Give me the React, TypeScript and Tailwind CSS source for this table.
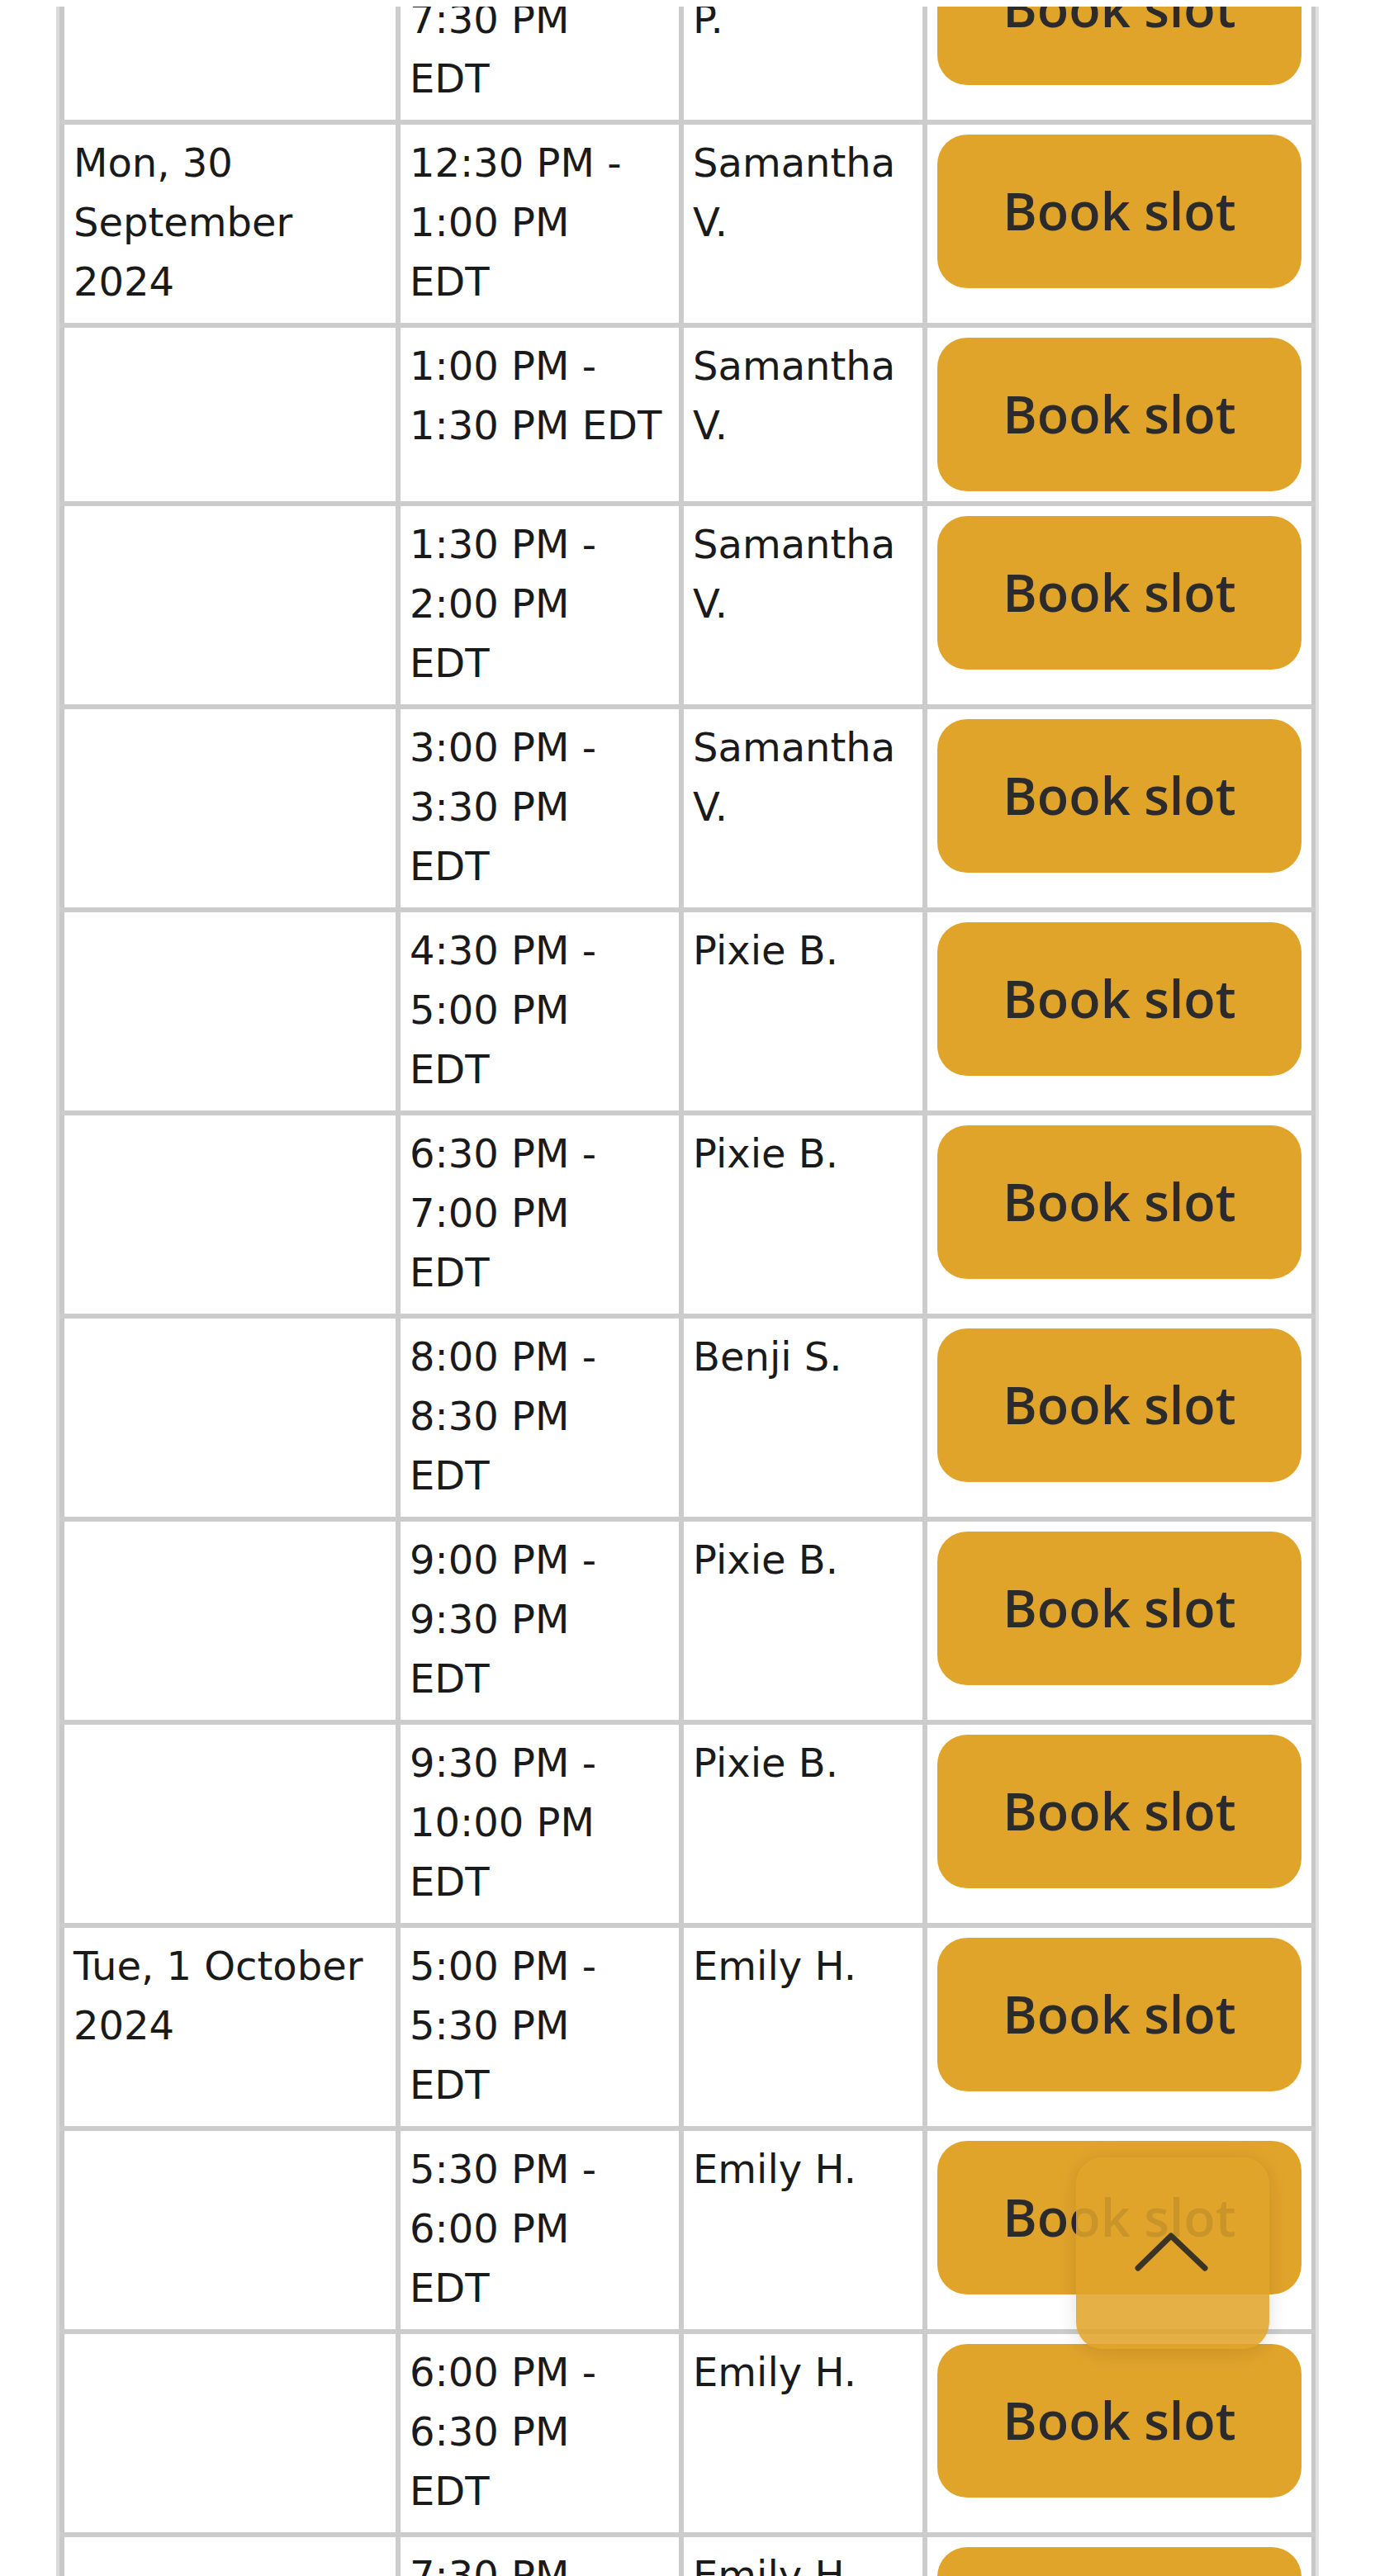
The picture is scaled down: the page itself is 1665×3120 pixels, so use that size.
type Slot = {
  date: string[];
  time: string[];
  host: string[];
};

const slots: Slot[] = [
  { date: [], time: ["7:00 PM -", "7:30 PM", "EDT"], host: ["\u00a0", "P."] },
  { date: ["Mon, 30", "September", "2024"], time: ["12:30 PM -", "1:00 PM", "EDT"], host: ["Samantha", "V."] },
  { date: [], time: ["1:00 PM -", "1:30 PM EDT"], host: ["Samantha", "V."] },
  { date: [], time: ["1:30 PM -", "2:00 PM", "EDT"], host: ["Samantha", "V."] },
  { date: [], time: ["3:00 PM -", "3:30 PM", "EDT"], host: ["Samantha", "V."] },
  { date: [], time: ["4:30 PM -", "5:00 PM", "EDT"], host: ["Pixie B."] },
  { date: [], time: ["6:30 PM -", "7:00 PM", "EDT"], host: ["Pixie B."] },
  { date: [], time: ["8:00 PM -", "8:30 PM", "EDT"], host: ["Benji S."] },
  { date: [], time: ["9:00 PM -", "9:30 PM", "EDT"], host: ["Pixie B."] },
  { date: [], time: ["9:30 PM -", "10:00 PM", "EDT"], host: ["Pixie B."] },
  { date: ["Tue, 1 October", "2024"], time: ["5:00 PM -", "5:30 PM", "EDT"], host: ["Emily H."] },
  { date: [], time: ["5:30 PM -", "6:00 PM", "EDT"], host: ["Emily H."] },
  { date: [], time: ["6:00 PM -", "6:30 PM", "EDT"], host: ["Emily H."] },
  { date: [], time: ["7:30 PM -", "8:00 PM", "EDT"], host: ["Emily H."] },
];

function Lines({ lines }: { lines: string[] }) {
  return (
    <>
      {lines.map((line, i) => (
        <span key={i} className="block whitespace-nowrap">
          {line}
        </span>
      ))}
    </>
  );
}

function SlotRow({ slot }: { slot: Slot }) {
  return (
    <div className="grid grid-cols-[407px_343px_295px_476px] border-b-[6px] border-[#cccccc]">
      <div className="border-l-[6px] border-[#c8c8c8] px-[11px] pt-[10px] pb-[14px]">
        <Lines lines={slot.date} />
      </div>
      <div className="border-l-[6px] border-[#cccccc] px-[11px] pt-[10px] pb-[14px]">
        <Lines lines={slot.time} />
      </div>
      <div className="border-l-[6px] border-[#cccccc] px-[11px] pt-[10px] pb-[14px]">
        <Lines lines={slot.host} />
      </div>
      <div className="border-l-[6px] border-r-[5px] border-[#cccccc] border-r-[#c8c8c8] px-[12px] py-[12px]">
        <button
          className="flex h-[186px] w-full items-center justify-center rounded-[36px] bg-[#e1a42b] pb-[2px] text-[63px] font-semibold text-[#2b2b2b]"
          style={{ fontFamily: "'Open Sans', 'DejaVu Sans', sans-serif" }}
        >
          Book slot
        </button>
      </div>
    </div>
  );
}

export default function App() {
  return (
    <div
      className="relative h-[3120px] w-[1665px] overflow-hidden bg-white pt-[8px] text-[48px] leading-[72px] text-[#1a1a1a]"
      style={{ fontFamily: "'DejaVu Sans', 'Liberation Sans', sans-serif" }}
    >
      <div className="h-full overflow-hidden">
        <div className="-mt-[103px] ml-[68px] w-[1529px] border-x-4 border-l-[#dadada] border-r-[#e0e0e0]">
          {slots.map((slot, i) => (
            <SlotRow key={i} slot={slot} />
          ))}
        </div>
      </div>

      {/* back to top */}
      <button
        aria-label="Back to top"
        className="absolute left-[1303px] top-[2613px] h-[232px] w-[234px] rounded-[32px] bg-[#e1a42b]/[0.87] shadow-[0_4px_24px_rgba(0,0,0,0.12)]"
      >
        <svg viewBox="0 0 234 232" className="h-full w-full" fill="none">
          <path
            d="M75 134 L115 95 L156 134"
            stroke="#3a3424"
            strokeWidth="7"
            strokeLinecap="round"
            strokeLinejoin="round"
          />
        </svg>
      </button>
    </div>
  );
}
